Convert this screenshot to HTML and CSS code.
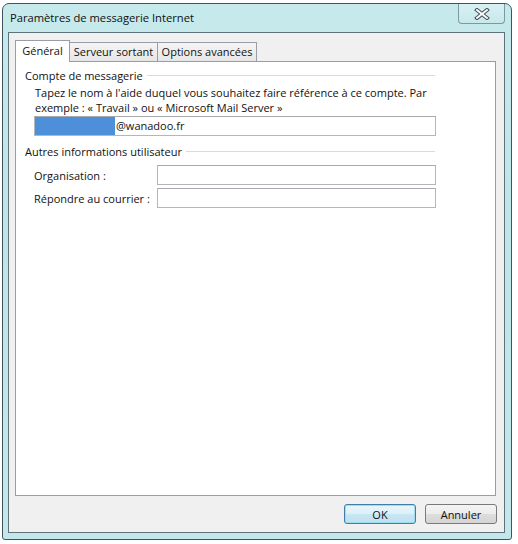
FILE: index.html
```html
<!DOCTYPE html>
<html lang="fr">
<head>
<meta charset="utf-8">
<title>Paramètres de messagerie Internet</title>
<link rel="stylesheet" href="styles.css">
</head>
<body>
<div class="window">
  <div class="titlebar">
    <span class="title">Paramètres de messagerie Internet</span>
    <div class="close">
      <svg width="16" height="12" viewBox="0 0 16 12">
        <path d="M3 2 L13 10 M13 2 L3 10" stroke="#46565c" stroke-width="4" stroke-linecap="square" fill="none"/>
        <path d="M3 2 L13 10 M13 2 L3 10" stroke="#ffffff" stroke-width="1.8" stroke-linecap="square" fill="none"/>
      </svg>
    </div>
  </div>
  <div class="client">
    <div class="tabs">
      <div class="tab active">Général</div>
      <div class="tab t2">Serveur sortant</div>
      <div class="tab t3">Options avancées</div>
    </div>
    <div class="page">
      <div class="group-head"><span>Compte de messagerie</span></div>
      <p class="desc">Tapez le nom à l'aide duquel vous souhaitez faire référence à ce compte. Par exemple : « Travail » ou « Microsoft Mail Server »</p>
      <div class="textbox account"><span class="masked"></span><span>@wanadoo.fr</span></div>

      <div class="group-head second"><span>Autres informations utilisateur</span></div>
      <div class="row first">
        <span class="label">Organisation :</span>
        <div class="textbox field"></div>
      </div>
      <div class="row">
        <span class="label">Répondre au courrier :</span>
        <div class="textbox field"></div>
      </div>
    </div>
    <div class="buttons">
      <div class="btn default">OK</div>
      <div class="btn">Annuler</div>
    </div>
  </div>
</div>
</body>
</html>
```

FILE: styles.css
```css
* { box-sizing: border-box; }

html, body {
  margin: 0;
  padding: 0;
  background: #ffffff;
}

body {
  font-family: "Open Sans", "Noto Sans", sans-serif;
  font-size: 11px;
  color: #111;
  width: 518px;
  height: 544px;
  overflow: hidden;
}

.window {
  margin: 3px 0 0 2px;
  width: 510px;
  height: 537px;
  border: 1px solid #42545b;
  border-radius: 7px 7px 3px 3px;
  background: linear-gradient(180deg, #c6e9ec 0%, #bfe5e8 40%, #c3e7ea 100%);
  padding: 0 6px 6px 5px;
  display: flex;
  flex-direction: column;
}

.titlebar {
  height: 28px;
  display: flex;
  justify-content: space-between;
  align-items: flex-start;
}

.title {
  padding-left: 2px;
  line-height: 28px;
  font-size: 11.2px;
  color: #101010;
}

.close {
  width: 47px;
  height: 20px;
  border: 1px solid #7a9aa0;
  border-top: none;
  border-radius: 0 0 4px 4px;
  background: linear-gradient(180deg, #d9f1f3 0%, #c8e8eb 100%);
  display: flex;
  align-items: center;
  justify-content: center;
  padding-top: 1px;
}

.client {
  height: 501px;
  border: 1px solid #5f7279;
  background: #f0f0f0;
  padding: 7px 8px 0 6px;
  display: flex;
  flex-direction: column;
}

.tabs {
  display: flex;
  align-items: flex-end;
  height: 21px;
  position: relative;
  z-index: 1;
}

.tab {
  height: 19px;
  border: 1px solid #999da5;
  border-bottom: none;
  background: linear-gradient(180deg, #f5f5f5 0%, #e6e6e6 100%);
  display: flex;
  align-items: center;
  justify-content: center;
  margin-left: -1px;
  padding-bottom: 1px;
}

.tab.active {
  height: 22px;
  margin-left: 0;
  margin-bottom: -1px;
  background: #ffffff;
  width: 55px;
  position: relative;
  z-index: 2;
  padding-bottom: 3px;
}

.tab.t2 { width: 89px; }
.tab.t3 { width: 100px; }

.page {
  height: 435px;
  background: #ffffff;
  border: 1px solid #999da5;
  padding: 7px 60px 0 9px;
  display: flex;
  flex-direction: column;
  align-items: stretch;
}

.group-head {
  display: flex;
  align-items: center;
  line-height: 13px;
  height: 13px;
}

.group-head::after {
  content: "";
  flex: 1;
  border-top: 1px solid #d5dde2;
  margin-left: 4px;
}

.group-head.second { margin-top: 9px; }

.desc {
  margin: 3px 0 0 10px;
  line-height: 15px;
  height: 30px;
}

.textbox {
  height: 20px;
  border: 1px solid #b4b6bb;
  border-top-color: #a6a9ae;
  background: #ffffff;
}

.account {
  margin: 1px -1px 0 9px;
  display: flex;
  align-items: center;
  padding: 0;
}

.masked {
  width: 80px;
  height: 18px;
  background: #4d8fd8;
}

.account span:last-child {
  padding-left: 1px;
  line-height: 18px;
}

.row {
  display: flex;
  align-items: center;
  margin-left: 9px;
  margin-right: -1px;
  margin-top: 3px;
}

.row.first { margin-top: 7px; }

.label {
  width: 123px;
}

.field {
  flex: 1;
  height: 20px;
}

.buttons {
  display: flex;
  justify-content: flex-end;
  gap: 9px;
  margin-top: 8px;
  margin-right: -1px;
}

.btn {
  width: 72px;
  height: 20px;
  border: 1px solid #7a7a7a;
  border-radius: 3px;
  background: linear-gradient(180deg, #f4f4f4 0%, #ececec 48%, #dddddd 52%, #d4d4d4 100%);
  display: flex;
  align-items: center;
  justify-content: center;
  font-size: 11px;
  color: #111;
}

.btn.default {
  border-color: #3d7fa8;
  box-shadow: inset 0 0 0 1px #9fdcef;
  background: linear-gradient(180deg, #eaf6fb 0%, #dcf0f8 48%, #c8e6f3 52%, #bfe1f0 100%);
}
```
